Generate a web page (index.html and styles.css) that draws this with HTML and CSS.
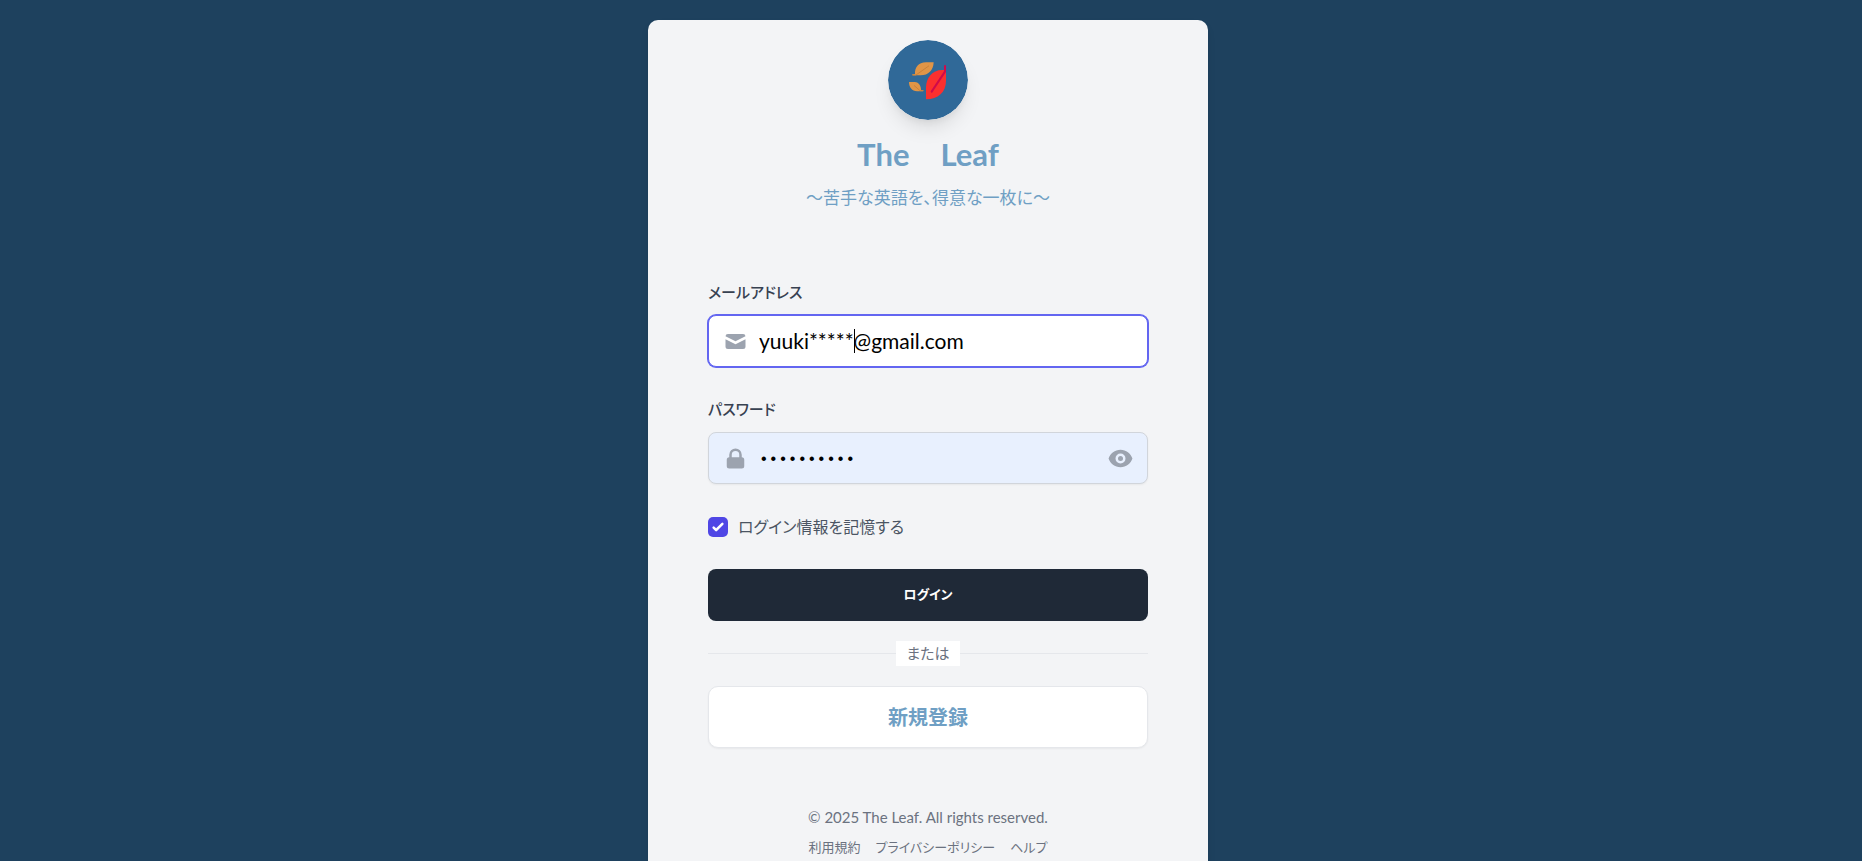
FILE: index.html
```html
<!DOCTYPE html>
<html lang="ja">
<head>
<meta charset="utf-8">
<meta name="viewport" content="width=device-width, initial-scale=1">
<title>The Leaf</title>
<link rel="stylesheet" href="styles.css">
</head>
<body>
<main class="card">
  <header class="brand">
    <svg class="logo" viewBox="0 0 240 240" aria-hidden="true">
      <circle cx="120" cy="120" r="120" fill="#306998"/>
      <path d="M73 103q5 0 8-1C80 84 91 67 114 67h23c-1 25-16 39-39 39H75q-3-1-2-3z" fill="#e09547"/>
      <path d="M74 105h10L122 78" fill="none" stroke="#c9823a" stroke-width="3" stroke-linecap="round"/>
      <path d="M63 126h17c14 1 19 12 19 25h6q3 2 0 3H87C72 153 63 142 63 126z" fill="#e09547"/>
      <path d="M79 137l17 15h9" fill="none" stroke="#c9823a" stroke-width="3" stroke-linecap="round"/>
      <path d="M114 178v-36c0-28 19-52 48-52h12v32c0 34-24 56-60 56z" fill="#fb302f"/>
      <path d="M171 78v17l-40 60" fill="none" stroke="#cf0a4b" stroke-width="6" stroke-linecap="round"/>
    </svg>
    <h1 class="title">The　Leaf</h1>
    <p class="tagline">〜苦手な英語を、得意な一枚に〜</p>
  </header>

  <form class="form">
    <div class="field">
      <label class="label" for="email">メールアドレス</label>
      <div class="control">
        <svg class="icon icon-lead" viewBox="0 0 20 20" aria-hidden="true"><path d="M2.003 5.884L10 9.882l7.997-3.998A2 2 0 0016 4H4a2 2 0 00-1.997 1.884z"/><path d="M18 8.118l-8 4-8-4V14a2 2 0 002 2h12a2 2 0 002-2V8.118z"/></svg>
        <input class="input input-active" id="email" type="email" value="yuuki*****@gmail.com">
        <span class="caret"></span>
      </div>
    </div>
    <div class="field">
      <label class="label" for="password">パスワード</label>
      <div class="control">
        <svg class="icon icon-lead" viewBox="0 0 20 20" aria-hidden="true"><path fill-rule="evenodd" d="M5 9V7a5 5 0 0110 0v2a2 2 0 012 2v5a2 2 0 01-2 2H5a2 2 0 01-2-2v-5a2 2 0 012-2zm8-2v2H7V7a3 3 0 016 0z"/></svg>
        <input class="input input-filled" id="password" type="password" value="leafleaf25">
        <button class="reveal" type="button" aria-label="パスワードを表示">
          <svg class="icon" viewBox="0 0 20 20" aria-hidden="true"><path d="M10 12a2 2 0 100-4 2 2 0 000 4z"/><path fill-rule="evenodd" d="M.458 10C1.732 5.943 5.522 3 10 3s8.268 2.943 9.542 7c-1.274 4.057-5.064 7-9.542 7S1.732 14.057.458 10zM14 10a4 4 0 11-8 0 4 4 0 018 0z"/></svg>
        </button>
      </div>
    </div>
    <label class="remember">
      <span class="check">
        <input class="checkbox" type="checkbox" checked>
        <svg class="tick" viewBox="0 0 16 16" aria-hidden="true"><path d="M12.207 4.793a1 1 0 010 1.414l-5 5a1 1 0 01-1.414 0l-2-2a1 1 0 011.414-1.414L6.5 9.086l4.293-4.293a1 1 0 011.414 0z"/></svg>
      </span>
      <span>ログイン情報を記憶する</span>
    </label>
    <button class="submit" type="submit">ログイン</button>
  </form>

  <div class="divider"><span class="divider-text">または</span></div>
  <a class="register" href="#register">新規登録</a>

  <footer class="footer">
    <p class="copyright">© 2025 The Leaf. All rights reserved.</p>
    <nav class="links">
      <a class="link" href="#terms">利用規約</a>
      <a class="link" href="#privacy">プライバシーポリシー</a>
      <a class="link" href="#help">ヘルプ</a>
    </nav>
  </footer>
</main>
</body>
</html>
```
FILE: styles.css
```css
*, *::before, *::after { box-sizing: border-box; }

body {
  margin: 0;
  padding: 20px 6px 20px 0;
  background: #1e415e;
  color: #374151;
  font-family: Lato, "Noto Sans CJK JP", sans-serif;
  font-size: 15px;
  line-height: 25px;
  font-feature-settings: "palt";
}

h1, p { margin: 0; }
a { text-decoration: none; }
button, input { font: inherit; font-feature-settings: inherit; }

.card {
  max-width: 560px;
  margin: 0 auto;
  padding: 20px 60px;
  background: #f3f4f6;
  border-radius: 10px;
  box-shadow: 0 5px 8px -1px rgba(0, 0, 0, .1);
}

.brand {
  display: flex;
  flex-direction: column;
  align-items: center;
  color: #6f9fc4;
}
.logo {
  width: 80px;
  height: 80px;
  border-radius: 50%;
  box-shadow: 0 12px 19px -4px rgba(0, 0, 0, .1), 0 5px 8px -5px rgba(0, 0, 0, .1);
}
.title {
  margin-top: 14px;
  font-size: 31px;
  line-height: 40px;
  font-weight: 700;
}
.tagline { margin-top: 9px; font-size: 17px; line-height: 30px; }

.form {
  display: flex;
  flex-direction: column;
  gap: 30px;
  margin-top: 67px;
}
.field { display: flex; flex-direction: column; gap: 10px; }
.label { font-weight: 500; }
.control { position: relative; display: flex; }
.input {
  width: 100%;
  height: 52px;
  padding: 0 50px;
  border: 1px solid #d1d5db;
  border-radius: 8px;
  background: #fff;
  color: #000;
  font-size: 21px;
  outline: none;
  box-shadow: 0 1px 2px rgba(0, 0, 0, .05);
}
.input-active {
  padding-bottom: 2px;
  border-color: #6366f1;
  box-shadow: 0 0 0 1px #6366f1;
}
.input-filled {
  padding-top: 4px;
  background: #e8f0fe;
  font-family: "Liberation Mono", monospace;
  font-size: 16px;
}
.icon { display: block; width: 25px; height: 25px; fill: #9ca3af; }
.icon-lead { position: absolute; left: 15px; top: 14px; }
.caret { position: absolute; left: 146px; top: 14px; width: 1px; height: 24px; background: #000; }
.reveal {
  position: absolute;
  right: 15px;
  top: 14px;
  padding: 0;
  border: 0;
  background: none;
}

.remember {
  display: flex;
  align-items: center;
  gap: 10px;
  color: #4b5563;
  font-size: 16px;
}
.check { position: relative; display: flex; }
.checkbox {
  appearance: none;
  width: 20px;
  height: 20px;
  margin: 0;
  border-radius: 5px;
  background: #4f46e5;
}
.tick { position: absolute; inset: 0; fill: #fff; pointer-events: none; }

.submit {
  height: 52px;
  padding: 0 0 2px;
  border: 0;
  border-radius: 8px;
  background: #1f2937;
  color: #fff;
  font-size: 13px;
  font-weight: 700;
}

.divider {
  display: flex;
  align-items: center;
  margin: 20px 0;
  color: #6b7280;
}
.divider::before, .divider::after {
  content: "";
  flex: 1;
  height: 1px;
  background: #e5e7eb;
}
.divider-text { padding: 0 10px; background: #fff; }

.register {
  display: block;
  padding: 15px;
  border: 1px solid #e5e7eb;
  border-radius: 10px;
  background: #fff;
  box-shadow: 0 1px 2px rgba(0, 0, 0, .05);
  color: #6f9fc4;
  font-size: 20px;
  line-height: 30px;
  font-weight: 700;
  text-align: center;
}

.footer {
  display: flex;
  flex-direction: column;
  align-items: center;
  gap: 10px;
  margin-top: 59px;
  color: #6b7280;
  line-height: 20px;
}
.links { display: flex; gap: 15px; font-size: 13px; }
.link { color: inherit; }
```
